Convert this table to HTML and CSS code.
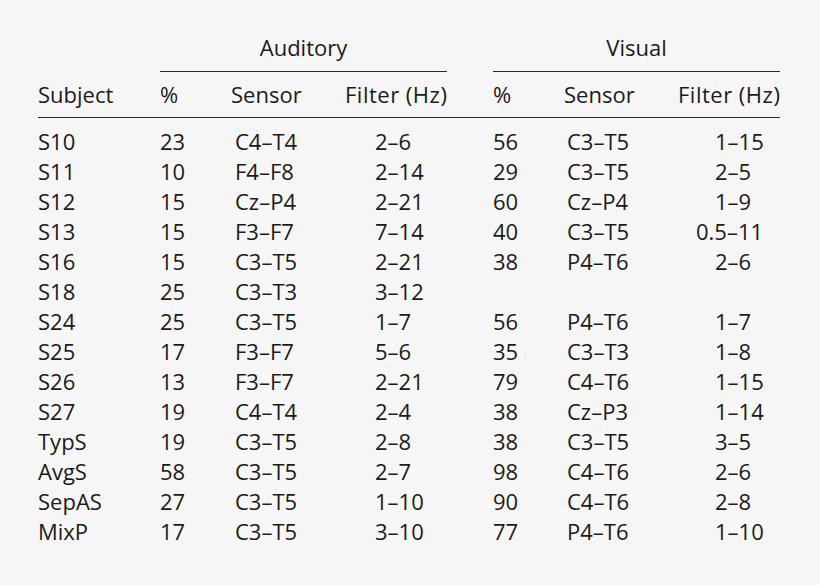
FILE: index.html
```html
<!DOCTYPE html>
<html lang="en">
<head>
<meta charset="utf-8">
<title>Table</title>
<link rel="stylesheet" href="styles.css">
</head>
<body>
<div class="page">
<table class="tbl">
  <colgroup>
    <col class="c-subj"><col class="c-pct"><col class="c-sen"><col class="c-fil">
    <col class="c-gap">
    <col class="c-pct"><col class="c-sen"><col class="c-fil">
  </colgroup>
  <thead>
    <tr class="group-row">
      <th class="blank"></th>
      <th class="group" colspan="3">Auditory</th>
      <th class="blank"></th>
      <th class="group" colspan="3">Visual</th>
    </tr>
    <tr class="head-row">
      <th class="h">Subject</th>
      <th class="h">%</th>
      <th class="h">Sensor</th>
      <th class="h h-fil">Filter (Hz)</th>
      <th class="h"></th>
      <th class="h">%</th>
      <th class="h">Sensor</th>
      <th class="h h-fil">Filter (Hz)</th>
    </tr>
  </thead>
  <tbody class="data">
    <tr><td>S10</td><td>23</td><td class="sa">C4–T4</td><td class="fa">2–6</td><td></td><td>56</td><td class="sv">C3–T5</td><td class="fv">1–15</td></tr>
    <tr><td>S11</td><td>10</td><td class="sa">F4–F8</td><td class="fa">2–14</td><td></td><td>29</td><td class="sv">C3–T5</td><td class="fv">2–5</td></tr>
    <tr><td>S12</td><td>15</td><td class="sa">Cz–P4</td><td class="fa">2–21</td><td></td><td>60</td><td class="sv">Cz–P4</td><td class="fv">1–9</td></tr>
    <tr><td>S13</td><td>15</td><td class="sa">F3–F7</td><td class="fa">7–14</td><td></td><td>40</td><td class="sv">C3–T5</td><td class="fv fv-dec">0.5–11</td></tr>
    <tr><td>S16</td><td>15</td><td class="sa">C3–T5</td><td class="fa">2–21</td><td></td><td>38</td><td class="sv">P4–T6</td><td class="fv">2–6</td></tr>
    <tr><td>S18</td><td>25</td><td class="sa">C3–T3</td><td class="fa">3–12</td><td></td><td></td><td class="sv"></td><td class="fv"></td></tr>
    <tr><td>S24</td><td>25</td><td class="sa">C3–T5</td><td class="fa">1–7</td><td></td><td>56</td><td class="sv">P4–T6</td><td class="fv">1–7</td></tr>
    <tr><td>S25</td><td>17</td><td class="sa">F3–F7</td><td class="fa">5–6</td><td></td><td>35</td><td class="sv">C3–T3</td><td class="fv">1–8</td></tr>
    <tr><td>S26</td><td>13</td><td class="sa">F3–F7</td><td class="fa">2–21</td><td></td><td>79</td><td class="sv">C4–T6</td><td class="fv">1–15</td></tr>
    <tr><td>S27</td><td>19</td><td class="sa">C4–T4</td><td class="fa">2–4</td><td></td><td>38</td><td class="sv">Cz–P3</td><td class="fv">1–14</td></tr>
    <tr><td>TypS</td><td>19</td><td class="sa">C3–T5</td><td class="fa">2–8</td><td></td><td>38</td><td class="sv">C3–T5</td><td class="fv">3–5</td></tr>
    <tr><td>AvgS</td><td>58</td><td class="sa">C3–T5</td><td class="fa">2–7</td><td></td><td>98</td><td class="sv">C4–T6</td><td class="fv">2–6</td></tr>
    <tr><td>SepAS</td><td>27</td><td class="sa">C3–T5</td><td class="fa">1–10</td><td></td><td>90</td><td class="sv">C4–T6</td><td class="fv">2–8</td></tr>
    <tr><td>MixP</td><td>17</td><td class="sa">C3–T5</td><td class="fa">3–10</td><td></td><td>77</td><td class="sv">P4–T6</td><td class="fv">1–10</td></tr>
  </tbody>
</table>
</div>
</body>
</html>
```
FILE: styles.css
```css
html, body {
  margin: 0;
  padding: 0;
  background: #f6f6f6;
}
body {
  width: 820px;
  height: 585px;
  overflow: hidden;
  font-family: "Open Sans", "Noto Sans", sans-serif;
  font-size: 22px;
  color: #1c1a1b;
}
.page {
  padding: 32px 0 0 38px;
}
.tbl {
  border-collapse: collapse;
  border-spacing: 0;
  table-layout: fixed;
  width: 742px;
}
.c-subj { width: 122px; }
.c-pct { width: 71px; }
.c-sen { width: 114px; }
.c-fil { width: 102px; }
.c-gap { width: 46px; }

.tbl th, .tbl td {
  padding: 0;
  line-height: 30px;
  font-weight: 400;
  text-align: left;
  white-space: nowrap;
}
.group-row .group {
  text-align: center;
  padding-bottom: 9px;
  border-bottom: 1.5px solid #2b2b2b;
}
.group-row .blank {
  padding-bottom: 9px;
}
.head-row .h {
  padding-top: 7px;
  padding-bottom: 8px;
  border-bottom: 1.5px solid #2b2b2b;
}
.head-row .h-fil {
  text-align: right;
  letter-spacing: 0.5px;
}
.data tr:first-child td {
  padding-top: 8px;
}
.data .sa { padding-left: 4px; }
.data .sv { padding-left: 3px; }
.data .fa { padding-left: 30px; }
.data .fv { padding-left: 37px; }
.data .fv-dec { padding-left: 18px; }
```
